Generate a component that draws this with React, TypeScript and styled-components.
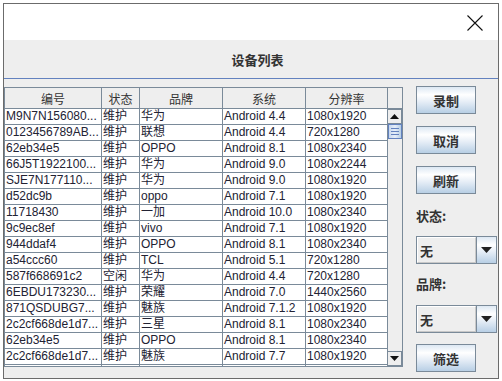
import styled, { createGlobalStyle } from "styled-components";

const GlobalStyle = createGlobalStyle`
    body {
        margin: 0;
        background: #ffffff;
        font-family: "Liberation Sans", "Noto Sans CJK SC", sans-serif;
    }
`;

const LINE = "#7a8a99";
const GRAD = "linear-gradient(to bottom, #dde8f3 0%, #ffffff 30%, #e8eff7 55%, #b8cfe5 100%)";

const D = {
    Dialog: styled.div`
        margin: 3px 0 0 3px;
        width: 496px;
        height: 376px;
        box-sizing: border-box;
        border: 1px solid #6b6b6b;
        background: #eeeeee;
        display: flex;
        flex-direction: column;
        overflow: hidden;
    `,
    TitleBar: styled.div`
        height: 36px;
        background: #ffffff;
        display: flex;
        justify-content: flex-end;
        align-items: center;
        padding-right: 15px;
    `,
    Close: styled.div`
        width: 16px;
        height: 16px;
        margin-top: 1px;
        cursor: pointer;
    `,
    Header: styled.div`
        height: 38px;
        border-bottom: 1px solid #6382bf;
        display: flex;
        align-items: center;
        justify-content: center;
        padding-left: 13px;
        font-family: "Noto Sans CJK SC", sans-serif;
        font-weight: 700;
        font-size: 13px;
        color: #333333;
    `,
    Body: styled.div`
        flex: 1;
        display: flex;
        align-items: flex-start;
    `,
    Side: styled.div`
        margin-left: 13px;
        padding-top: 7px;
        display: flex;
        flex-direction: column;
        align-items: flex-start;
    `,
};

const T = {
    Pane: styled.div`
        margin-top: 8px;
        width: 399px;
        height: 280px;
        box-sizing: border-box;
        border: 1px solid ${LINE};
        background: #ffffff;
        display: grid;
        grid-template-columns: 383px 14px;
        grid-template-rows: 21px 257px;
        overflow: hidden;
    `,
    Grid: styled.div`
        display: grid;
        grid-template-columns: 97px 38px 83px 83px 82px;
        grid-auto-rows: 16px;
        align-content: start;
        overflow: hidden;
    `,
    HeadCell: styled.div`
        height: 21px;
        box-sizing: border-box;
        background: #eeeeee;
        border-right: 1px solid ${LINE};
        border-bottom: 1px solid ${LINE};
        display: flex;
        align-items: center;
        justify-content: center;
        font-family: "Noto Sans CJK SC", sans-serif;
        font-size: 12px;
        color: #333333;
    `,
    Corner: styled.div`
        background: #eeeeee;
        border-bottom: 1px solid ${LINE};
        box-sizing: border-box;
    `,
    Cell: styled.div`
        box-sizing: border-box;
        border-right: 1px solid ${LINE};
        border-bottom: 1px solid ${LINE};
        padding-left: 1px;
        font-size: 12px;
        line-height: 15px;
        color: #222233;
        white-space: nowrap;
        overflow: hidden;
    `,
    Scroll: styled.div`
        display: flex;
        flex-direction: column;
        background: #eeeeee;
    `,
    ArrowBtn: styled.div`
        height: 15px;
        box-sizing: border-box;
        border: 1px solid ${LINE};
        border-left: none;
        background: #eeeeee;
        display: flex;
        align-items: center;
        justify-content: center;
    `,
    Thumb: styled.div`
        height: 15px;
        box-sizing: border-box;
        border: 1px solid #6382bf;
        background: linear-gradient(to right, #c8d8ee, #e6eef9 50%, #b8cfe5);
        display: flex;
        flex-direction: column;
        justify-content: center;
        align-items: center;
        gap: 2px;
    `,
    Grip: styled.div`
        width: 8px;
        height: 1px;
        background: #6382bf;
    `,
    Track: styled.div`
        flex: 1;
    `,
};

const S = {
    Button: styled.button<{ mt: number }>`
        margin-top: ${({ mt }) => mt}px;
        width: 60px;
        height: 28px;
        padding: 0;
        border: 1px solid ${LINE};
        background: ${GRAD};
        font-family: "Noto Sans CJK SC", sans-serif;
        font-weight: 700;
        font-size: 13px;
        color: #333333;
        cursor: pointer;
    `,
    Label: styled.div<{ mt: number }>`
        margin-top: ${({ mt }) => mt}px;
        height: 16px;
        line-height: 16px;
        font-family: "Noto Sans CJK SC", sans-serif;
        font-weight: 700;
        font-size: 13px;
        color: #333333;
    `,
    Combo: styled.div<{ mt: number }>`
        margin-top: ${({ mt }) => mt}px;
        width: 81px;
        height: 28px;
        box-sizing: border-box;
        border: 1px solid ${LINE};
        display: flex;
    `,
    ComboValue: styled.div`
        flex: 1;
        box-sizing: border-box;
        border: 1px solid #ffffff;
        border-right-color: #c8c8c8;
        border-bottom-color: #c8c8c8;
        background: #eeeeee;
        display: flex;
        align-items: center;
        padding-left: 2px;
        font-family: "Noto Sans CJK SC", sans-serif;
        font-weight: 700;
        font-size: 13px;
        color: #333333;
    `,
    ComboArrow: styled.div`
        width: 19px;
        border-left: 1px solid ${LINE};
        background: ${GRAD};
        display: flex;
        align-items: center;
        justify-content: center;
    `,
};

const rows: string[][] = [
    ["M9N7N156080...", "维护", "华为", "Android 4.4", "1080x1920"],
    ["0123456789AB...", "维护", "联想", "Android 4.4", "720x1280"],
    ["62eb34e5", "维护", "OPPO", "Android 8.1", "1080x2340"],
    ["66J5T1922100...", "维护", "华为", "Android 9.0", "1080x2244"],
    ["SJE7N177110...", "维护", "华为", "Android 9.0", "1080x1920"],
    ["d52dc9b", "维护", "oppo", "Android 7.1", "1080x1920"],
    ["11718430", "维护", "一加", "Android 10.0", "1080x2340"],
    ["9c9ec8ef", "维护", "vivo", "Android 7.1", "1080x1920"],
    ["944ddaf4", "维护", "OPPO", "Android 8.1", "1080x2340"],
    ["a54ccc60", "维护", "TCL", "Android 5.1", "720x1280"],
    ["587f668691c2", "空闲", "华为", "Android 4.4", "720x1280"],
    ["6EBDU173230...", "维护", "荣耀", "Android 7.0", "1440x2560"],
    ["871QSDUBG7...", "维护", "魅族", "Android 7.1.2", "1080x1920"],
    ["2c2cf668de1d7...", "维护", "三星", "Android 8.1", "1080x2340"],
    ["62eb34e5", "维护", "OPPO", "Android 8.1", "1080x2340"],
    ["2c2cf668de1d7...", "维护", "魅族", "Android 7.7", "1080x1920"],
    // next row only peeks in at the bottom edge
    ["", "", "", "", ""],
];

const columns = ["编号", "状态", "品牌", "系统", "分辨率"];

const Triangle = ({ up }: { up?: boolean }) => (
    <svg width="9" height="5" viewBox="0 0 9 5">
        <path d={up ? "M0 5 L4.5 0 L9 5 Z" : "M0 0 L9 0 L4.5 5 Z"} fill="#111" />
    </svg>
);

const Combo = ({ mt, value }: { mt: number; value: string }) => (
    <S.Combo mt={mt}>
        <S.ComboValue>{value}</S.ComboValue>
        <S.ComboArrow>
            <svg width="11" height="6" viewBox="0 0 11 6">
                <path d="M0 0 L11 0 L5.5 6 Z" fill="#222" />
            </svg>
        </S.ComboArrow>
    </S.Combo>
);

const App = () => {
    return (
        <>
            <GlobalStyle />
            <D.Dialog>
                <D.TitleBar>
                    <D.Close>
                        <svg width="16" height="16" viewBox="0 0 16 16">
                            <path d="M0.5 0.5 L15.5 15.5 M15.5 0.5 L0.5 15.5" stroke="#111" strokeWidth="1.1" />
                        </svg>
                    </D.Close>
                </D.TitleBar>
                <D.Header>设备列表</D.Header>
                <D.Body>
                    <T.Pane>
                        <T.Grid>
                            {columns.map((c) => (
                                <T.HeadCell key={c}>{c}</T.HeadCell>
                            ))}
                        </T.Grid>
                        <T.Corner />
                        <T.Grid>
                            {rows.map((row, i) =>
                                row.map((v, j) => <T.Cell key={i + "-" + j}>{v}</T.Cell>)
                            )}
                        </T.Grid>
                        <T.Scroll>
                            <T.ArrowBtn>
                                <Triangle up />
                            </T.ArrowBtn>
                            <T.Thumb>
                                <T.Grip />
                                <T.Grip />
                                <T.Grip />
                            </T.Thumb>
                            <T.Track />
                            <T.ArrowBtn>
                                <Triangle />
                            </T.ArrowBtn>
                        </T.Scroll>
                    </T.Pane>
                    <D.Side>
                        <S.Button mt={0}>录制</S.Button>
                        <S.Button mt={12}>取消</S.Button>
                        <S.Button mt={12}>刷新</S.Button>
                        <S.Label mt={14}>状态:</S.Label>
                        <Combo mt={12} value="无" />
                        <S.Label mt={12}>品牌:</S.Label>
                        <Combo mt={13} value="无" />
                        <S.Button mt={11}>筛选</S.Button>
                    </D.Side>
                </D.Body>
            </D.Dialog>
        </>
    );
};

export default App;
